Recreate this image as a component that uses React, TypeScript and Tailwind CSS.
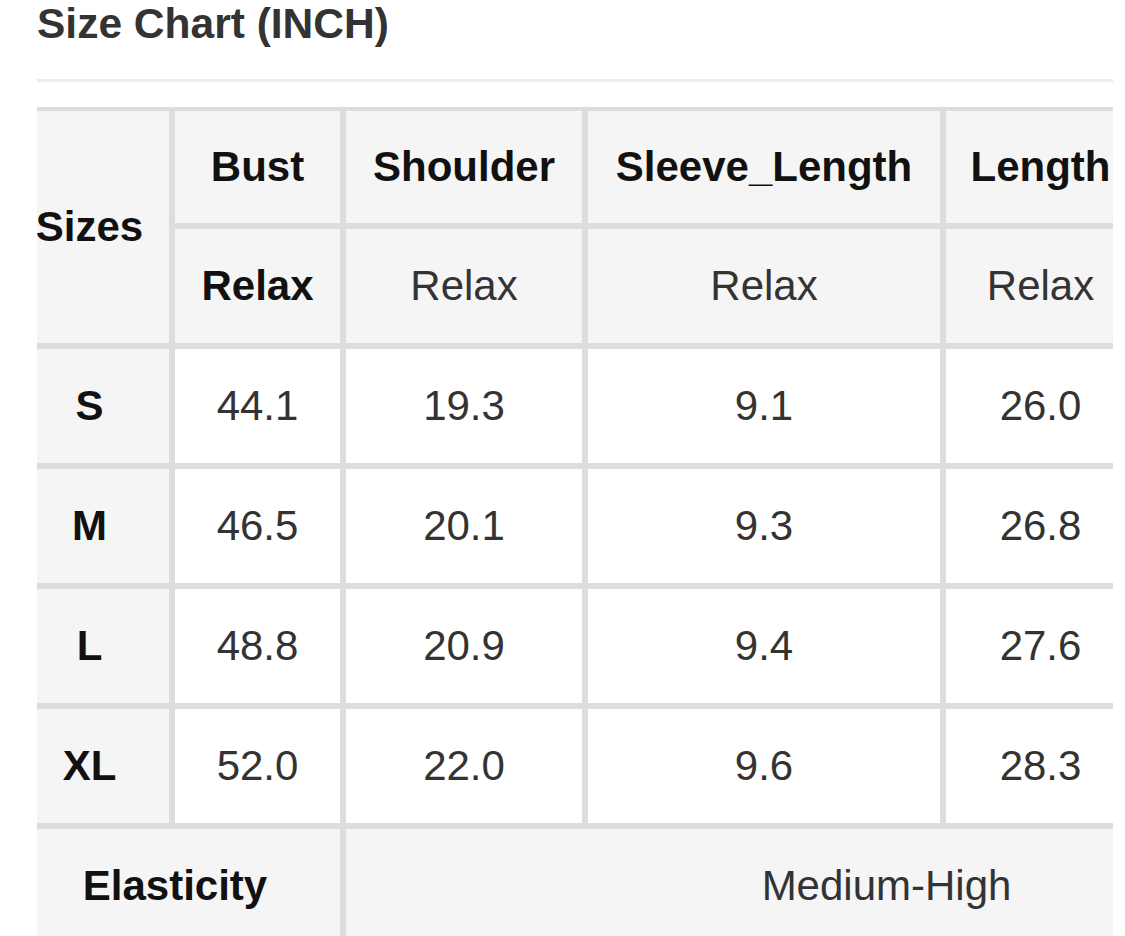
import React from "react";

const sizes = [
  { s: "S", v: ["44.1", "19.3", "9.1", "26.0"] },
  { s: "M", v: ["46.5", "20.1", "9.3", "26.8"] },
  { s: "L", v: ["48.8", "20.9", "9.4", "27.6"] },
  { s: "XL", v: ["52.0", "22.0", "9.6", "28.3"] },
];

const cell = "flex items-center justify-center text-center whitespace-nowrap";
const head = `${cell} bg-[#f5f5f5] font-bold text-[#111]`;
const data = `${cell} bg-white text-[#333]`;

export default function App() {
  return (
    <div
      className="w-[1125px] h-[936px] overflow-hidden bg-white pl-[37px]"
      style={{ fontFamily: '"Liberation Sans", Arial, Helvetica, sans-serif' }}
    >
      <div className="w-[1076px]">
        <h1 className="text-[42.5px] leading-[47px] font-bold text-[#333] m-0">Size Chart (INCH)</h1>
        <div className="mt-[32px] h-[3px] bg-[#ececec]" />
        <div className="mt-[25px] overflow-hidden">
          <div className="ml-[-27px] w-[1417px] shrink-0 grid grid-cols-[159px_165px_236px_352px_189px_286px] grid-rows-[112px_114px_114px_114px_114px_114px_114px] gap-[6px] bg-[#dddddd] pt-[4px] text-[42px] leading-[48px]">
            <div className={`${head} row-span-2`}>Sizes</div>
            <div className={head}>Bust</div>
            <div className={head}>Shoulder</div>
            <div className={head}>Sleeve_Length</div>
            <div className={head}>Length</div>
            <div className={head}></div>
            <div className={head}>Relax</div>
            <div className={`${cell} bg-[#f5f5f5] text-[#333]`}>Relax</div>
            <div className={`${cell} bg-[#f5f5f5] text-[#333]`}>Relax</div>
            <div className={`${cell} bg-[#f5f5f5] text-[#333]`}>Relax</div>
            <div className={`${cell} bg-[#f5f5f5] text-[#333]`}></div>
            {sizes.map((r) => (
              <React.Fragment key={r.s}>
                <div className={head}>{r.s}</div>
                {r.v.map((x, i) => (
                  <div key={i} className={data}>
                    {x}
                  </div>
                ))}
                <div className={data}></div>
              </React.Fragment>
            ))}
            <div className={`${head} col-span-2`}>Elasticity</div>
            <div className={`${cell} col-span-4 bg-[#f5f5f5] text-[#333]`}>Medium-High</div>
          </div>
        </div>
      </div>
    </div>
  );
}
